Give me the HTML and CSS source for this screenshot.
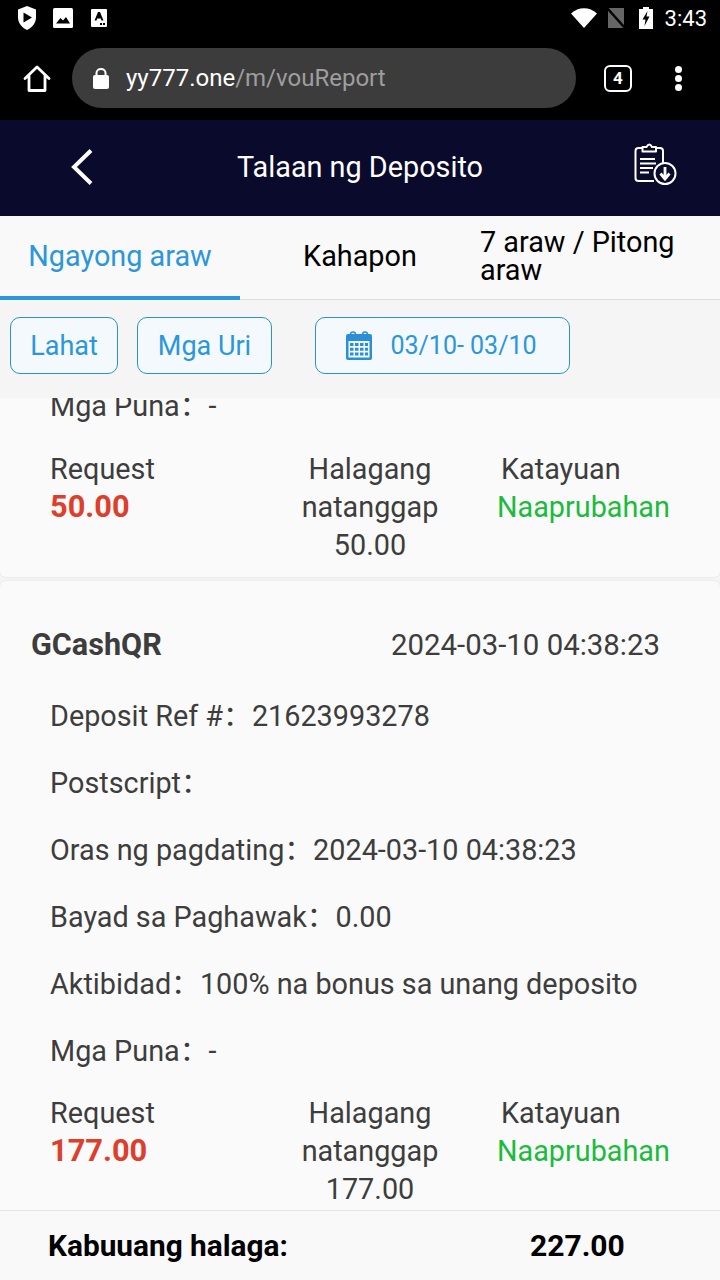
FILE: index.html
```html
<!DOCTYPE html>
<html lang="en">
<head>
    <meta charset="UTF-8">
    <meta name="viewport" content="width=device-width, initial-scale=1.0">
    <title>Talaan ng Deposito</title>
    <link rel="stylesheet" href="styles.css">
</head>
<body>
    <!-- Status bar -->
    <div class="statusbar">
        <div class="status-left">
            <svg width="22" height="26" viewBox="0 0 22 26"><path d="M11 1 L20 4.500 V12 C20 18 16.500 22.500 11 25 C5.500 22.500 2 18 2 12 V4.500 Z" fill="#fff"/><path d="M7.500 7.500 L16 12.500 L7.500 17.500 Z" fill="#000"/></svg>
            <svg width="20" height="20" viewBox="0 0 20 20"><rect width="20" height="20" rx="1.500" fill="#fff"/><path d="M3 15.500 L7.500 10 L10 12.500 L13 9 L17 15.500 Z" fill="#000"/></svg>
            <svg class="status-a" width="16" height="18" viewBox="0 0 16 18"><rect width="16" height="18" rx="1" fill="#fff"/><path d="M3.500 11.500 L7 3 H9 L12.500 11.500 H10.500 L9.800 9.500 H6.200 L5.500 11.500 Z" fill="#000"/><rect x="9" y="14" width="2" height="2" fill="#000"/><rect x="12" y="14" width="2" height="2" fill="#000"/></svg>
        </div>
        <div class="status-right">
            <svg class="wifi" width="26" height="20" viewBox="0 0 26 20"><path d="M0 5.500 C7.500 -1.500 18.500 -1.500 26 5.500 L13 20 Z" fill="#fff"/></svg>
            <svg class="sim" width="18" height="20" viewBox="0 0 18 20"><path d="M1 0 H17 V20 H1 Z" fill="#666"/><path d="M0 0 L18 20" stroke="#000" stroke-width="2.500"/></svg>
            <svg class="battery" width="14" height="22" viewBox="0 0 14 22"><path d="M4 0 H10 V2 H14 V22 H0 V2 H4 Z" fill="#fff"/><path d="M8.500 4 L3.500 12.500 H6.500 L5.500 19 L10.500 9.500 H7.500 Z" fill="#000"/></svg>
            <span class="status-time">3:43</span>
        </div>
    </div>

    <!-- Browser toolbar -->
    <div class="toolbar">
        <svg class="home-icon" width="28" height="28" viewBox="0 0 28 28"><path d="M2 13.500 L14 2 L26 13.500 M6 10.500 V25.500 H22 V10.500" fill="none" stroke="#fff" stroke-width="2.800" stroke-linejoin="round" stroke-linecap="round"/></svg>
        <div class="urlbar">
            <svg width="18" height="22" viewBox="0 0 18 22"><rect x="1" y="8" width="16" height="14" rx="2" fill="#fff"/><path d="M4.500 8.500 V6 C4.500 0.500 13.500 0.500 13.500 6 V8.500" fill="none" stroke="#fff" stroke-width="2"/></svg>
            <span class="url-host">yy777.one</span><span class="url-path">/m/vouReport</span>
        </div>
        <div class="tab-count">4</div>
        <div class="menu-dots"><i></i><i></i><i></i></div>
    </div>

    <!-- Page header -->
    <div class="header">
        <svg class="back-icon" width="24" height="38" viewBox="0 0 24 38"><path d="M21 2.500 L4 19 L21 35.500" fill="none" stroke="#fff" stroke-width="4"/></svg>
        <span class="header-title">Talaan ng Deposito</span>
        <svg class="export-icon" width="44" height="42" viewBox="0 0 44 42">
            <path d="M8.500 5 H4.500 Q1.500 5 1.500 8 V35 Q1.500 38 4.500 38 H20 M22 5 H26 Q29 5 29 8 V20" fill="none" stroke="#fff" stroke-width="2"/>
            <path d="M8.500 8.500 V4 H12.500 Q15.300 -1 18 4 H22 V8.500 Z" fill="none" stroke="#fff" stroke-width="2" stroke-linejoin="round"/>
            <path d="M6 16 H21 M6 20.500 H22 M6 25 H19 M6 29.500 H15" stroke="#fff" stroke-width="2"/>
            <circle cx="31" cy="30.500" r="10.500" fill="#0a0a2c" stroke="#fff" stroke-width="2"/>
            <path d="M31 24 V35 M26.500 30.500 L31 36 L35.500 30.500" fill="none" stroke="#fff" stroke-width="2.800"/>
        </svg>
    </div>

    <!-- Tabs -->
    <div class="tabs">
        <div class="tab active">Ngayong araw</div>
        <div class="tab">Kahapon</div>
        <div class="tab tab-left">7 araw / Pitong araw</div>
    </div>

    <!-- Filters -->
    <div class="filters">
        <div class="chip chip-all">Lahat</div>
        <div class="chip chip-type">Mga Uri</div>
        <div class="chip chip-date">
            <svg width="26" height="29" viewBox="0 0 26 29">
                <rect x="0" y="3" width="26" height="26" rx="2" fill="#2b8fd8"/>
                <circle cx="7" cy="3.500" r="2.500" fill="none" stroke="#2b8fd8" stroke-width="1.500"/>
                <circle cx="19" cy="3.500" r="2.500" fill="none" stroke="#2b8fd8" stroke-width="1.500"/>
                <path d="M2.500 10 H23.500 V26.500 H2.500 Z" fill="#f3f9fd"/>
                <path d="M4 12 h3.500 v3 h-3.500 z M9 12 h3.500 v3 h-3.500 z M14 12 h3.500 v3 h-3.500 z M19 12 h3 v3 h-3 z M4 16.700 h3.500 v3 h-3.500 z M9 16.700 h3.500 v3 h-3.500 z M14 16.700 h3.500 v3 h-3.500 z M19 16.700 h3 v3 h-3 z M4 21.400 h3.500 v3 h-3.500 z M9 21.400 h3.500 v3 h-3.500 z M14 21.400 h3.500 v3 h-3.500 z M19 21.400 h3 v3 h-3 z" fill="#2b8fd8"/>
            </svg>
            <span>03/10- 03/10</span>
        </div>
    </div>

    <!-- List -->
    <div class="list">
        <div class="card card-first">
            <div class="row">Mga Puna：-</div>
            <div class="summary">
                <div class="col-request">Request<div class="amount">50.00</div></div>
                <div class="col-received">Halagang natanggap<div>50.00</div></div>
                <div class="col-status"><div class="status-label">Katayuan</div><div class="status-ok">Naaprubahan</div></div>
            </div>
        </div>
        <div class="card">
            <div class="card-head">
                <span class="card-name">GCashQR</span>
                <span class="card-date">2024-03-10 04:38:23</span>
            </div>
            <div class="row">Deposit Ref #：21623993278</div>
            <div class="row">Postscript：</div>
            <div class="row">Oras ng pagdating：2024-03-10 04:38:23</div>
            <div class="row">Bayad sa Paghawak：0.00</div>
            <div class="row">Aktibidad：100% na bonus sa unang deposito</div>
            <div class="row">Mga Puna：-</div>
            <div class="summary">
                <div class="col-request">Request<div class="amount">177.00</div></div>
                <div class="col-received">Halagang natanggap<div>177.00</div></div>
                <div class="col-status"><div class="status-label">Katayuan</div><div class="status-ok">Naaprubahan</div></div>
            </div>
        </div>
    </div>

    <!-- Total -->
    <div class="footer">
        <span class="total-label">Kabuuang halaga:</span>
        <span class="total-value">227.00</span>
    </div>
</body>
</html>
```

FILE: styles.css
```css
body {
    font-family: Roboto, "Noto Sans CJK SC", sans-serif;
    margin: 0;
    padding: 0;
    width: 720px;
    height: 1280px;
    overflow: hidden;
    display: flex;
    flex-direction: column;
    background: #f5f5f5;
}
.statusbar {
    height: 36px;
    background: #000;
    color: #fff;
    display: flex;
    justify-content: space-between;
    align-items: center;
    padding: 0 13px 0 16px;
    flex-shrink: 0;
}
.status-left {
    display: flex;
    align-items: center;
    gap: 15px;
}
.status-a {
    margin-left: 3px;
}
.status-right {
    display: flex;
    align-items: center;
}
.sim {
    margin-left: 10px;
}
.battery {
    margin-left: 14px;
}
.status-time {
    font-size: 22px;
    margin-left: 12px;
}
.toolbar {
    height: 84px;
    background: #000;
    display: flex;
    align-items: flex-start;
    flex-shrink: 0;
}
.home-icon {
    margin: 29px 21px 0 23px;
}
.urlbar {
    width: 504px;
    height: 60px;
    margin-top: 12px;
    border-radius: 30px;
    background: #3c3c3c;
    display: flex;
    align-items: center;
    padding-left: 20px;
    box-sizing: border-box;
    font-size: 24px;
}
.urlbar svg {
    margin-right: 16px;
}
.url-host {
    color: #fff;
}
.url-path {
    color: #9e9e9e;
}
.tab-count {
    width: 28px;
    height: 27px;
    box-sizing: border-box;
    margin: 29px 0 0 28px;
    border: 2px solid #fff;
    border-radius: 6px;
    color: #fff;
    font-size: 17px;
    font-weight: 700;
    text-align: center;
    line-height: 23px;
}
.menu-dots {
    margin: 30px 0 0 43px;
    display: flex;
    flex-direction: column;
    gap: 2px;
}
.menu-dots i {
    width: 7px;
    height: 7px;
    border-radius: 50%;
    background: #fff;
}
.header {
    height: 96px;
    background: #0a0a2c;
    color: #fff;
    display: grid;
    grid-template-columns: 1fr auto 1fr;
    align-items: center;
    padding: 0 42px 2px 72px;
    box-sizing: border-box;
    flex-shrink: 0;
}
.back-icon {
    margin-left: -2px;
}
.header-title {
    font-size: 28.8px;
    transform: translateX(-15px);
}
.export-icon {
    justify-self: end;
    margin-bottom: 6px;
}
.tabs {
    height: 84px;
    display: flex;
    box-sizing: border-box;
    border-bottom: 1px solid #ddd;
    background: #f9f9f9;
    flex-shrink: 0;
}
.tab {
    width: 240px;
    height: 84px;
    padding-bottom: 4px;
    box-sizing: border-box;
    display: flex;
    align-items: center;
    justify-content: center;
    text-align: center;
    font-size: 28.8px;
    line-height: 28px;
    color: #000;
}
.tab-left {
    text-align: left;
}
.tab.active {
    color: #2b96dc;
    border-bottom: 4px solid #2b96dc;
    padding-bottom: 0;
}
.filters {
    height: 98px;
    background: #f5f5f5;
    display: flex;
    align-items: flex-start;
    padding: 17px 0 0 10px;
    box-sizing: border-box;
    flex-shrink: 0;
}
.chip {
    height: 57px;
    box-sizing: border-box;
    border: 1px solid #2b8fd0;
    border-radius: 10px;
    color: #2b96dc;
    background: #f3f9fd;
    font-size: 27px;
    display: flex;
    align-items: center;
    justify-content: center;
}
.chip-all {
    width: 108px;
}
.chip-type {
    width: 135px;
    margin-left: 19px;
}
.chip-date {
    width: 255px;
    margin-left: 43px;
    padding-right: 2px;
    font-size: 25px;
    gap: 18px;
}
.list {
    flex: 1;
    min-height: 0;
    overflow: hidden;
}
.card {
    background: #fafafa;
    box-shadow: 0 0 3px rgba(0, 0, 0, 0.09);
    border-radius: 6px;
    margin-bottom: 4px;
    padding: 0 30px 20px 30px;
    color: #3d3d3d;
    font-size: 28.8px;
}
.card-first {
    margin-top: -18px;
    height: 197px;
    box-sizing: border-box;
    padding-top: 6px;
    padding-bottom: 0;
}
.card-first .row {
    height: 40px;
    line-height: 40px;
    margin-bottom: 15px;
}
.card-head {
    display: flex;
    justify-content: space-between;
    align-items: center;
    height: 127px;
    padding-left: 1px;
    padding-right: 30px;
    margin-bottom: -25px;
}
.card-name {
    font-weight: 700;
    font-size: 30.6px;
}
.card-date {
    font-size: 29.4px;
}
.row {
    height: 67px;
    line-height: 67px;
    padding-left: 20px;
    white-space: nowrap;
}
.summary {
    display: flex;
    line-height: 38px;
    padding-top: 9px;
    padding-left: 20px;
}
.col-request {
    width: 245px;
}
.amount {
    color: #dd3f2c;
    font-weight: 700;
    font-size: 30.8px;
}
.col-received {
    width: 150px;
    text-align: center;
}
.col-status {
    margin-left: 52px;
}
.status-label {
    padding-left: 4px;
}
.status-ok {
    color: #1bbb3c;
}
.footer {
    height: 70px;
    background: #f9f9f9;
    border-top: 1px solid #e5e5e5;
    box-sizing: border-box;
    display: flex;
    align-items: center;
    color: #000;
    font-weight: 700;
    font-size: 29.8px;
    flex-shrink: 0;
}
.total-label {
    width: 482px;
    padding-left: 48px;
    box-sizing: border-box;
}
.total-value {
    margin-left: 48px;
    font-size: 30px;
}
```
